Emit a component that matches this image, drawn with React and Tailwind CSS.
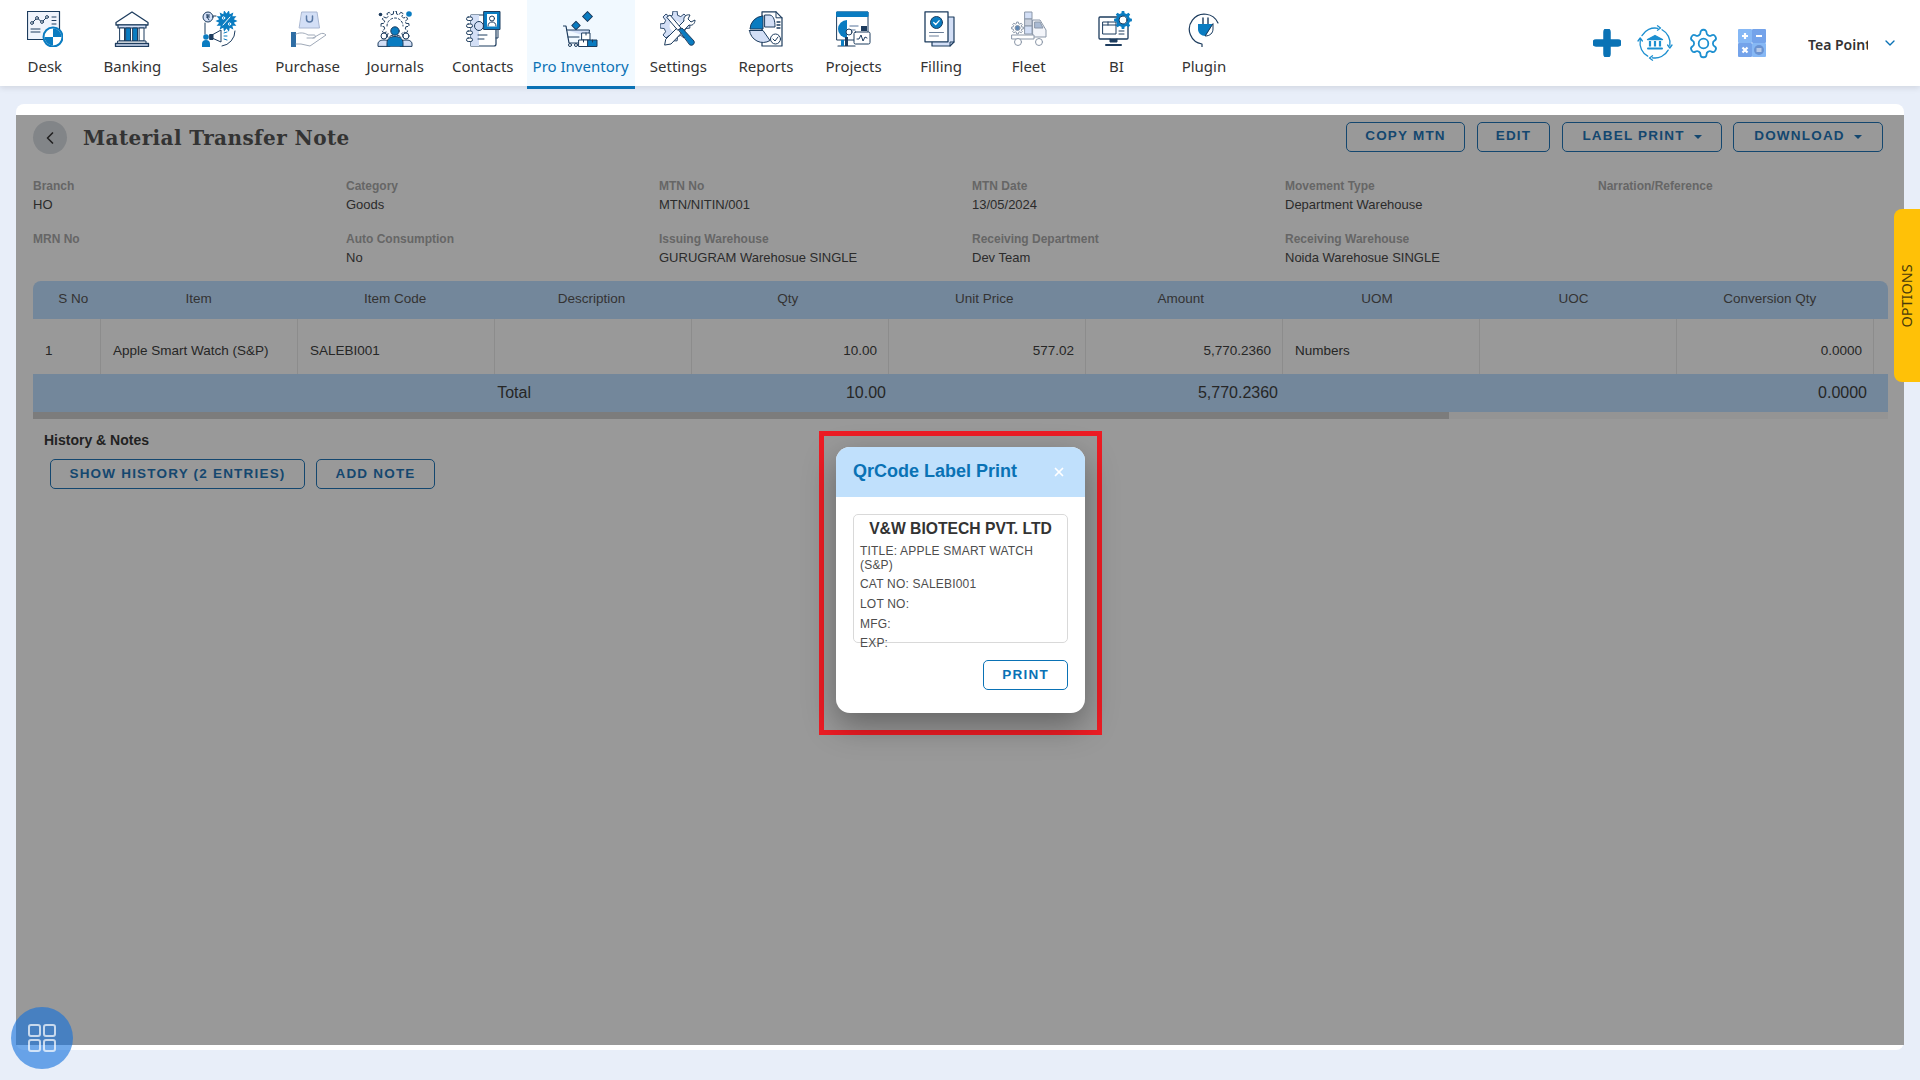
import { ChevronDown, ChevronLeft, X } from 'lucide-react';

const NAVY = '#1d3c5e';
const BLUE = '#0a7cc1';
const PALE = '#d3dff6';

// star or cog outline, points alternate between two radii
function ring(cx, cy, r1, r2, n) {
  const pts = [];
  for (let i = 0; i < n * 2; i++) {
    const a = (Math.PI * i) / n;
    const r = i % 2 ? r2 : r1;
    pts.push(`${(cx + r * Math.cos(a)).toFixed(2)},${(cy + r * Math.sin(a)).toFixed(2)}`);
  }
  return pts.join(' ');
}

function cog(cx, cy, r1, r2, n) {
  const pts = [];
  for (let i = 0; i < n; i++) {
    const step = (Math.PI * 2) / n;
    const a = step * i;
    [[-0.3, r2], [-0.18, r1], [0.18, r1], [0.3, r2]].forEach(([k, r]) => {
      pts.push(`${(cx + r * Math.cos(a + k * step)).toFixed(2)},${(cy + r * Math.sin(a + k * step)).toFixed(2)}`);
    });
  }
  return pts.join(' ');
}

function Svg({ children, size = 36 }) {
  return (
    <svg width={size} height={size} viewBox="0 0 36 36" fill="none" stroke={NAVY} strokeWidth="1" strokeLinecap="round" strokeLinejoin="round">
      {children}
    </svg>
  );
}

const DeskIcon = () => (
  <Svg>
    <rect x="0.5" y="0.5" width="32" height="28" fill="#f0f4fc" strokeWidth="1.2" />
    <polyline points="5,12 10,7 15,11 20,6" stroke={NAVY} />
    <circle cx="5" cy="12" r="1.4" fill="#fff" /><circle cx="10" cy="7" r="1.4" fill="#fff" />
    <circle cx="15" cy="11" r="1.4" fill="#fff" /><circle cx="20" cy="6" r="1.4" fill="#fff" />
    <path d="M25 6h4M25 9.500h4M25 13h4M4 18h9M4 21h9" />
    <circle cx="26" cy="26" r="9.500" fill="#fff" stroke={BLUE} strokeWidth="2" />
    <path d="M26 17.500a8.500 8.500 0 0 1 8.500 8.500H26zM26 26h-8.500a8.500 8.500 0 0 0 8.500 8.500z" fill={BLUE} stroke="none" />
  </Svg>
);

const BankIcon = () => (
  <Svg>
    <path d="M18 1L34 11.500V14H2V11.500z" fill="#fff" strokeWidth="1.300" />
    <path d="M4 14h28v3H4z" fill={PALE} strokeWidth="1.200" />
    <rect x="6" y="17" width="4.500" height="13" fill="#fff" />
    <rect x="12" y="17" width="4.500" height="13" fill={BLUE} />
    <rect x="19" y="17" width="4.500" height="13" fill={BLUE} />
    <rect x="25.500" y="17" width="4.500" height="13" fill="#fff" />
    <rect x="4" y="30" width="28" height="2.500" fill="#fff" />
    <rect x="1.500" y="32.500" width="33" height="3" fill={PALE} strokeWidth="1.300" />
  </Svg>
);

const SalesIcon = () => (
  <Svg>
    <polygon points={ring(24.500, 10, 11, 7.500, 14)} fill={BLUE} stroke="none" />
    <path d="M21 14l7-8" stroke="#fff" />
    <circle cx="21.500" cy="7" r="1.200" stroke="#fff" /><circle cx="27.500" cy="13" r="1.200" stroke="#fff" />
    <circle cx="6" cy="6" r="5" fill={PALE} />
    <path d="M4.500 4h3M4.500 6h3M5 4c2 0 2 2 0 2l2 3" />
    <path d="M11 5h3M3 12v11M33 20a15 15 0 0 1-13 15" />
    <path d="M10 24l9-5v12l-9-4z" fill="#fff" />
    <rect x="8" y="23.500" width="3" height="5" fill={NAVY} />
    <path d="M22 22l3-1M22 25h3M22 28l3 1" stroke={BLUE} />
    <circle cx="4" cy="26" r="2.800" fill={BLUE} stroke="none" />
    <path d="M0 36v-3a4 4 0 0 1 8 0v3z" fill={BLUE} stroke="none" />
  </Svg>
);

const PurchaseIcon = () => (
  <Svg>
    <path d="M12 1h15l2.500 16h-20z" fill={PALE} stroke="#a9b7d2" />
    <path d="M16.500 5v3a3 3 0 0 0 6 0V5" stroke="#5b7aa5" strokeWidth="1.500" />
    <rect x="1" y="21" width="5" height="15" fill="#2e6da4" stroke="none" />
    <path d="M6 23c5-2 9-1 12 1h6c2 0 2 3 0 3h-7M6 33l5 0 9 2 16-11c-2-2-4-2-6-1l-7 4" stroke="#9fa9b8" fill="#fff" />
  </Svg>
);

const JournalsIcon = () => (
  <Svg>
    <polygon points={cog(18, 14, 14, 11, 12)} fill="#fff" strokeDasharray="5 2" />
    <path d="M10 15a8 8 0 0 1 16 0" strokeDasharray="2 2" />
    <circle cx="32" cy="3" r="2.800" fill={BLUE} stroke="none" />
    <circle cx="3.500" cy="3.500" r="1.800" fill={NAVY} stroke="none" />
    <circle cx="7" cy="25" r="3" fill="#fff" /><circle cx="29" cy="25" r="3" fill="#fff" />
    <path d="M1 35v-2c0-3 3-4 6-4s6 1 6 4v2zM23 35v-2c0-3 3-4 6-4s6 1 6 4v2z" fill={PALE} />
    <circle cx="18" cy="20" r="4.200" fill={BLUE} stroke={NAVY} />
    <path d="M10 35.500v-4c0-4 4-6 8-6s8 2 8 6v4z" fill={BLUE} stroke={NAVY} />
  </Svg>
);

const ContactsIcon = () => (
  <Svg>
    <path d="M6 4h23a2 2 0 0 1 2 2v27a2 2 0 0 1-2 2H6z" fill="#fff" strokeWidth="1.200" />
    <path d="M6 4h8v31H6z" fill={PALE} stroke="none" />
    <rect x="1.500" y="6" width="6" height="3.500" rx="1.700" fill="#fff" />
    <rect x="1.500" y="13" width="6" height="3.500" rx="1.700" fill="#fff" />
    <rect x="1.500" y="20" width="6" height="3.500" rx="1.700" fill="#fff" />
    <rect x="1.500" y="27" width="6" height="3.500" rx="1.700" fill="#fff" />
    <circle cx="14" cy="15" r="4.500" fill={PALE} />
    <path d="M31 16h2v11h-2M13 24h9M13 28h6" />
    <rect x="19" y="0.500" width="16" height="18" fill={BLUE} stroke={NAVY} />
    <rect x="22" y="3" width="10" height="12.500" fill="#fff" stroke="none" />
    <circle cx="27" cy="7.500" r="2.500" fill="#fff" />
    <path d="M23 15c0-3 2-4 4-4s4 1 4 4" />
  </Svg>
);

const InventoryIcon = () => (
  <Svg>
    <rect x="21" y="2" width="7" height="7" fill={BLUE} stroke={NAVY} transform="rotate(45 24.500 5.500)" />
    <rect x="10" y="11.500" width="6" height="6" fill={BLUE} transform="rotate(45 13 14.500)" />
    <path d="M0 15h3l3 17h9" strokeWidth="1.200" />
    <path d="M3.500 19h23l-1 7" fill={PALE} />
    <path d="M5 26h11" />
    <circle cx="7" cy="34" r="1.500" fill="#fff" /><circle cx="13" cy="34" r="1.500" fill="#fff" />
    <rect x="19" y="22" width="8" height="7" fill="#fff" />
    <rect x="16" y="29" width="9" height="6.500" fill="#fff" />
    <rect x="25" y="29" width="9" height="6.500" fill={BLUE} stroke={NAVY} />
    <path d="M23 22v2M20.500 29v2M29.500 29v2" />
  </Svg>
);

const SettingsIcon = () => (
  <Svg>
    <polygon points={cog(15, 15, 15, 11, 8)} fill={PALE} stroke="#334e70" />
    <circle cx="15" cy="15" r="5.500" fill="#fff" stroke="none" />
    <path d="M5 34l6-1 18-19c3 1 6-1 6-5l-4 2-3-3 2-4c-4-1-7 2-6 6L6 28z" fill="#fff" />
    <path d="M7 6l3-2 11 13-3 2z" fill="#fff" />
    <path d="M19 19l3-2 12 13a3 3 0 0 1-4 4z" fill={BLUE} stroke={NAVY} />
  </Svg>
);

const ReportsIcon = () => (
  <Svg>
    <path d="M14 0.800h14l6 6V35H14z" fill="#fff" strokeWidth="1.200" />
    <path d="M28 0.800v6h6" />
    <path d="M14 5a13.500 13.500 0 0 0-12 13h13V5z" fill={BLUE} />
    <path d="M1.500 19.500H15l7 10a13.500 13.500 0 0 1-20.500-10z" fill={PALE} />
    <path d="M17 4h5c4 1 5 6 5 12H17z" fill={PALE} />
    <path d="M29 11h3M29 14h3M29 17h3" strokeWidth="1.300" />
    <circle cx="27.500" cy="28" r="5" fill="#fff" />
    <path d="M25 28l2 2 3-4" />
  </Svg>
);

const ProjectsIcon = () => (
  <Svg>
    <rect x="1" y="1" width="31" height="28" fill="#fff" />
    <rect x="1" y="1" width="31" height="4.500" fill={BLUE} stroke={BLUE} />
    <path d="M11 9a9 9 0 0 0-9 9 9 9 0 0 0 9 9z" fill={BLUE} stroke="none" />
    <path d="M11 19h8M14 15h8" strokeWidth="1.400" stroke="#8ea2bd" />
    <circle cx="13" cy="21" r="3" fill="#fff" />
    <rect x="25" y="15" width="6" height="5" fill={NAVY} stroke="none" />
    <path d="M2 35h17" strokeWidth="1.200" />
    <rect x="5" y="29" width="3" height="6" fill={BLUE} stroke="none" />
    <rect x="9" y="26" width="3" height="9" fill={NAVY} stroke="none" />
    <rect x="18" y="21" width="16" height="12" rx="1.500" fill="#fff" />
    <polyline points="21,28 23,28 25,24 27,30 29,26 31,27" />
  </Svg>
);

const FillingIcon = () => (
  <Svg>
    <path d="M9 6h22v25l-4 4H9z" fill={PALE} strokeWidth="1.200" />
    <path d="M27 35v-4h4" />
    <rect x="2" y="0.800" width="23" height="30" fill="#fff" strokeWidth="1.300" />
    <circle cx="13.500" cy="11.500" r="6" fill={BLUE} />
    <path d="M10.700 11.500l2 2 3.500-3.800" stroke="#fff" strokeWidth="1.200" />
    <path d="M6.500 21.500h14M6.500 25h9" stroke="#6b7f99" />
  </Svg>
);

const FleetIcon = () => (
  <Svg>
    <g stroke="#8b97a8">
      <polygon points={cog(6.500, 17, 6, 4.500, 8)} fill="#fff" />
      <circle cx="6.500" cy="17" r="2.500" fill="#5d87b5" />
      <rect x="14" y="1" width="7" height="7" fill={PALE} />
      <rect x="14" y="8" width="7" height="7" fill="#c9d0dd" />
      <rect x="14" y="15" width="7" height="8" fill={PALE} />
      <path d="M22 9h7l6 10v7H22z" fill="#f3f5fa" />
      <path d="M24 11h5l3 6h-8z" fill="#a9bad3" />
      <path d="M1 24h22v4H1z" fill="#fff" />
      <circle cx="7" cy="31" r="3.500" fill="#fff" /><circle cx="28" cy="31" r="3.500" fill="#fff" />
    </g>
  </Svg>
);

const BiIcon = () => (
  <Svg>
    <rect x="1" y="6" width="29" height="22" rx="1" fill="#fff" strokeWidth="1.300" />
    <rect x="5" y="11" width="13" height="12" fill="#fff" />
    <path d="M5 14h13M10 11v3" />
    <path d="M21 20h5M21 23h5" />
    <path d="M12 28v3h7v-3" fill={NAVY} />
    <path d="M8 34h15" strokeWidth="2" />
    <polygon points={cog(25, 9, 9, 7, 8)} fill={BLUE} stroke="none" />
    <circle cx="25" cy="9" r="4" fill="#fff" stroke={NAVY} />
  </Svg>
);

const PluginIcon = () => (
  <Svg>
    <path d="M32 12A15 15 0 1 0 16 33v3" strokeWidth="1.200" />
    <path d="M17 7v6M22 7v6" strokeWidth="1.400" />
    <path d="M12 13h15v5c0 4-3 7-7.500 7-4.500 0-7.500-3-7.500-7z" fill={BLUE} stroke="none" />
    <path d="M27 13v5c0 4-3 7-7.500 7z" fill="#fff" stroke={NAVY} />
  </Svg>
);

const NAV = [
  { label: 'Desk', Icon: DeskIcon },
  { label: 'Banking', Icon: BankIcon },
  { label: 'Sales', Icon: SalesIcon },
  { label: 'Purchase', Icon: PurchaseIcon },
  { label: 'Journals', Icon: JournalsIcon },
  { label: 'Contacts', Icon: ContactsIcon },
  { label: 'Pro Inventory', Icon: InventoryIcon, active: true },
  { label: 'Settings', Icon: SettingsIcon },
  { label: 'Reports', Icon: ReportsIcon },
  { label: 'Projects', Icon: ProjectsIcon },
  { label: 'Filling', Icon: FillingIcon },
  { label: 'Fleet', Icon: FleetIcon },
  { label: 'BI', Icon: BiIcon },
  { label: 'Plugin', Icon: PluginIcon },
];

const FIELDS = [
  ['Branch', 'HO'],
  ['Category', 'Goods'],
  ['MTN No', 'MTN/NITIN/001'],
  ['MTN Date', '13/05/2024'],
  ['Movement Type', 'Department Warehouse'],
  ['Narration/Reference', ''],
  ['MRN No', ''],
  ['Auto Consumption', 'No'],
  ['Issuing Warehouse', 'GURUGRAM Warehosue SINGLE'],
  ['Receiving Department', 'Dev Team'],
  ['Receiving Warehouse', 'Noida Warehosue SINGLE'],
];

const HEADERS = ['Item', 'Item Code', 'Description', 'Qty', 'Unit Price', 'Amount', 'UOM', 'UOC', 'Conversion Qty'];

const CELLS = [
  ['Apple Smart Watch (S&P)', 'text-left'],
  ['SALEBI001', 'text-left'],
  ['', 'text-left'],
  ['10.00', 'text-right'],
  ['577.02', 'text-right'],
  ['5,770.2360', 'text-right'],
  ['Numbers', 'text-left'],
  ['', 'text-left'],
  ['0.0000', 'text-right'],
];

function NavItem({ label, Icon, active }) {
  return (
    <div className={`flex flex-col items-center h-[89px] shrink-0 pt-[11px] ${active ? 'w-[108px] bg-[#f1f9ff] border-b-[3px] border-[#0a72b5] text-[#0a72b5]' : 'w-[87.6px] text-[#333]'}`}>
      <Icon />
      <span className="mt-[9px] text-[15px] leading-[20px] whitespace-nowrap">{label}</span>
    </div>
  );
}

function OutlineBtn({ children, caret, className = '' }) {
  return (
    <button className={`h-[30px] flex items-center justify-center gap-[9px] border border-[#14476f] rounded-[5px] font-['Liberation_Sans',sans-serif] font-bold text-[13.5px] tracking-[1.2px] text-[#14476f] ${className}`}>
      {children}
      {caret && <span className="w-0 h-0 border-x-[4px] border-x-transparent border-t-[4px] border-t-[#14476f]" />}
    </button>
  );
}

function TopActions() {
  return (
    <div className="ml-auto flex items-center h-[86px] pr-[22px]">
      <svg width="28" height="28" viewBox="0 0 28 28" className="mr-[16px]">
        <path d="M14 3v22M3 14h22" stroke="#0a72b5" strokeWidth="7.500" strokeLinecap="round" />
      </svg>
      <svg width="36" height="36" viewBox="0 0 36 36" fill="none" stroke="#1c8fd0" strokeWidth="1.300" strokeLinecap="round" strokeLinejoin="round" className="mr-[14px]">
        <circle cx="18" cy="18" r="15" strokeDasharray="18.500 5.050" transform="rotate(-62 18 18)" />
        <path d="M20.500 0.800l3 2.200-3 2.200M35 20l-2.200 3-2.200-3M15.500 30.800l-3 2.200 3 2.200M1 16l2.200-3 2.200 3" />
        <path d="M18 10.500l7.500 4h-15z" fill="#1c8fd0" />
        <path d="M13 16v5.500M18 16v5.500M23 16v5.500" strokeWidth="2.200" strokeLinecap="butt" />
        <path d="M11 23.500h14" strokeWidth="2" />
      </svg>
      <svg width="33" height="33" viewBox="0 0 24 24" fill="none" stroke="#1c8fd0" strokeWidth="1.300" strokeLinecap="round" strokeLinejoin="round" className="mr-[18px]">
        <path d="M12.220 2h-.44a2 2 0 0 0-2 2v.18a2 2 0 0 1-1 1.730l-.43.25a2 2 0 0 1-2 0l-.15-.08a2 2 0 0 0-2.730.73l-.22.380a2 2 0 0 0 .73 2.730l.15.1a2 2 0 0 1 1 1.720v.51a2 2 0 0 1-1 1.740l-.15.09a2 2 0 0 0-.73 2.730l.22.380a2 2 0 0 0 2.730.73l.15-.08a2 2 0 0 1 2 0l.43.25a2 2 0 0 1 1 1.730V20a2 2 0 0 0 2 2h.44a2 2 0 0 0 2-2v-.18a2 2 0 0 1 1-1.730l.43-.25a2 2 0 0 1 2 0l.15.08a2 2 0 0 0 2.730-.73l.22-.39a2 2 0 0 0-.73-2.730l-.15-.08a2 2 0 0 1-1-1.740v-.5a2 2 0 0 1 1-1.740l.15-.09a2 2 0 0 0 .73-2.730l-.22-.380a2 2 0 0 0-2.730-.73l-.15.08a2 2 0 0 1-2 0l-.43-.25a2 2 0 0 1-1-1.730V4a2 2 0 0 0-2-2z" />
        <circle cx="12" cy="12" r="3.500" />
      </svg>
      <svg width="28" height="28" viewBox="0 0 28 28" className="mr-[42px]">
        <rect width="14" height="14" rx="1" fill="#86b8f5" />
        <rect x="14" width="14" height="14" rx="1" fill="#74a3ea" />
        <rect y="14" width="14" height="14" rx="1" fill="#74a3ea" />
        <rect x="14" y="14" width="14" height="14" rx="1" fill="#86b8f5" />
        <path d="M4 7h6M7 4v6M18 7h6M4.500 18.500l5 5M9.500 18.500l-5 5" stroke="#fff" strokeWidth="2.200" />
        <circle cx="21" cy="21" r="5" fill="#6a93d2" />
        <path d="M18.500 20h5M18.500 22h5" stroke="#fff" strokeWidth="1.200" />
      </svg>
      <span className="w-[60px] overflow-hidden whitespace-nowrap font-semibold text-[14px] leading-[20px] text-[#333] mr-[14px] mt-[4px]">Tea Point</span>
      <ChevronDown size={16} color="#0a72b5" />
    </div>
  );
}

function Field({ label, value }) {
  return (
    <div className="w-[313px] h-[53px] shrink-0">
      <div className="text-[12px] leading-[18px] font-bold text-[#666] pt-[1px]">{label}</div>
      <div className="text-[13px] leading-[18px] mt-[1px] text-[#2b2b2b]">{value}</div>
    </div>
  );
}

function ItemTable() {
  return (
    <div className="mt-[-1px] w-[1855px] text-[13.5px] font-['Liberation_Sans',sans-serif]">
      <div className="flex items-center h-[38px] bg-[#73879b] rounded-t-lg text-[#333] pb-[2px]">
        <div className="w-[67.5px] pl-[13px] text-center shrink-0">S No</div>
        {HEADERS.map(h => (
          <div key={h} className="w-[196.4px] text-center shrink-0">{h}</div>
        ))}
      </div>
      <div className="flex h-[55px] text-[#262626]">
        <div className="w-[68px] shrink-0 pl-[12px] leading-[63px] border-r border-[#8c8c8c]">1</div>
        {CELLS.map(([text, align], i) => (
          <div key={i} className={`w-[197px] shrink-0 ${align === 'text-left' ? 'pl-[12px]' : 'pr-[11px]'} leading-[63px] border-r border-[#8c8c8c] ${align}`}>{text}</div>
        ))}
      </div>
      <div className="flex items-center h-[38px] bg-[#73879b] text-[16px] text-[#262626]">
        <div className="w-[498px] text-right shrink-0">Total</div>
        <div className="w-[355px] text-right shrink-0">10.00</div>
        <div className="w-[392px] text-right shrink-0">5,770.2360</div>
        <div className="flex-1 text-right pr-[21px]">0.0000</div>
      </div>
      <div className="h-[7px] bg-[#949494]">
        <div className="h-full w-[1416px] bg-[#7c7c7c]" />
      </div>
    </div>
  );
}

function LabelModal() {
  return (
    <div className="absolute left-[819px] top-[431px] w-[283px] h-[304px] border-[5px] border-[#ed1c24] pl-[12px] pt-[11px]">
      <div className="w-[249px] h-[266px] bg-white rounded-[14px] overflow-hidden shadow-[0_12px_32px_rgba(0,0,0,0.35)] font-['Liberation_Sans',sans-serif]">
        <div className="h-[50px] bg-[#c0e0fc] flex items-center justify-between pl-[17px] pr-[19px]">
          <span className="font-bold text-[18px] mt-[-2px] text-[#0a72b5]">QrCode Label Print</span>
          <X size={14} color="#fff" strokeWidth={3} />
        </div>
        <div className="px-[17px] pt-[17px]">
          <div className="h-[129px] border border-[#d9d9d9] rounded-[5px] px-[6px] pt-[5px] text-[#4d4d4d] text-[12px] tracking-[0.2px]">
            <div className="text-center font-bold text-[15.7px] leading-[18px] tracking-normal text-[#333]">V&amp;W BIOTECH PVT. LTD</div>
            <div className="leading-[14px] mt-[6px] mb-[5px]">TITLE: APPLE SMART WATCH (S&amp;P)</div>
            <div className="leading-[15px] mb-[5px]">CAT NO: SALEBI001</div>
            <div className="leading-[15px] mb-[5px]">LOT NO:</div>
            <div className="leading-[15px] mb-[4px]">MFG:</div>
            <div className="leading-[15px]">EXP:</div>
          </div>
          <div className="flex justify-end mt-[17px]">
            <button className="w-[85px] h-[30px] border border-[#0a72b5] rounded-[5px] font-bold text-[13.5px] tracking-[1.25px] text-[#0a72b5]">PRINT</button>
          </div>
        </div>
      </div>
    </div>
  );
}

export default function App() {
  return (
    <div className="relative w-[1920px] h-[1080px] overflow-hidden bg-[#e8eef9] font-['Noto_Sans',sans-serif]">
      <header className="h-[86px] pl-[1px] bg-white shadow-[0_2px_6px_rgba(0,0,0,0.1)] flex items-start relative">
        {NAV.map(n => <NavItem key={n.label} {...n} />)}
        <TopActions />
      </header>

      <main className="mx-[16px] mt-[18px] h-[946px] bg-white rounded-lg pt-[11px] pb-[5px] font-['Liberation_Sans',sans-serif]">
        <div className="h-full bg-[#999] pt-[6px] pl-[17px] pr-[21px]">
          <div className="flex items-center h-[33px]">
            <div className="w-[34px] h-[33px] rounded-full bg-[#828588] flex items-center justify-center">
              <ChevronLeft size={20} color="#222" />
            </div>
            <h1 className="ml-[16px] font-['DejaVu_Serif',serif] font-bold text-[20px] tracking-[0.4px] text-[#333]">Material Transfer Note</h1>
            <div className="ml-auto flex gap-[12px] mt-[-2px]">
              <OutlineBtn className="w-[119px]">COPY MTN</OutlineBtn>
              <OutlineBtn className="w-[73px]">EDIT</OutlineBtn>
              <OutlineBtn caret className="w-[160px]">LABEL PRINT</OutlineBtn>
              <OutlineBtn caret className="w-[150px] !ml-[-1px]">DOWNLOAD</OutlineBtn>
            </div>
          </div>

          <div className="flex flex-wrap w-[1878px] mt-[22px]">
            {FIELDS.map(([l, v]) => <Field key={l} label={l} value={v} />)}
          </div>

          <ItemTable />

          <div className="ml-[11px] mt-[12px] text-[14px] leading-[18px] font-bold text-[#222]">History &amp; Notes</div>
          <div className="flex gap-[11px] ml-[17px] mt-[10px]">
            <OutlineBtn className="w-[255px]">SHOW HISTORY (2 ENTRIES)</OutlineBtn>
            <OutlineBtn className="w-[119px]">ADD NOTE</OutlineBtn>
          </div>
        </div>
      </main>

      <div className="absolute right-0 top-[209px] w-[26px] h-[173px] bg-[#ffc107] rounded-l-lg flex items-center justify-center">
        <span className="-rotate-90 text-[14.5px] text-[#4a3b0a] whitespace-nowrap">OPTIONS</span>
      </div>

      <div className="absolute left-[11px] top-[1007px] w-[62px] h-[62px] rounded-full bg-[#1170dc]/60 flex items-center justify-center">
        <div className="grid grid-cols-2 gap-[2px]">
          <span className="w-[13px] h-[13px] rounded-[3px] border-[2.5px] border-white/70" />
          <span className="w-[13px] h-[13px] rounded-[3px] border-[2.5px] border-white/70" />
          <span className="w-[13px] h-[13px] rounded-[3px] border-[2.5px] border-white/70" />
          <span className="w-[13px] h-[13px] rounded-[3px] border-[2.5px] border-white/70" />
        </div>
      </div>

      <LabelModal />
    </div>
  );
}
